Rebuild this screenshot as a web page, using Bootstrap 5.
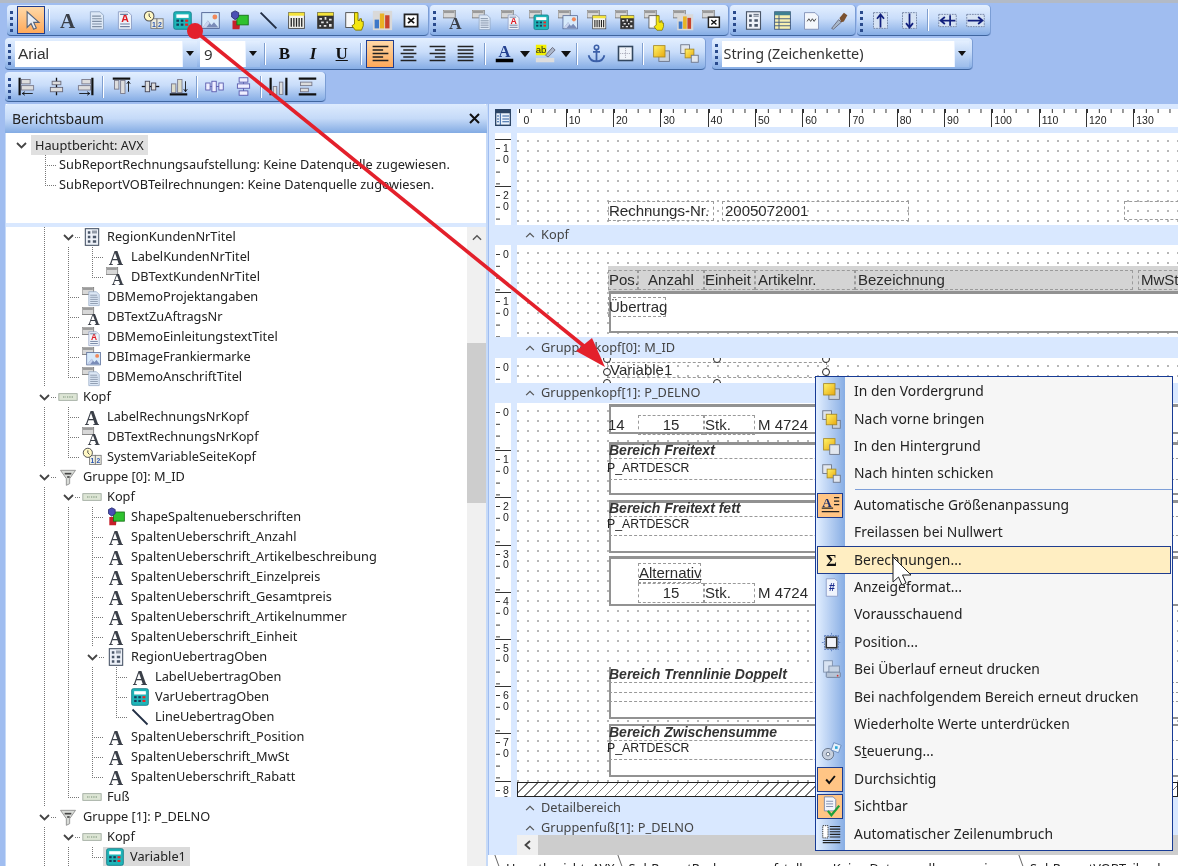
<!DOCTYPE html>
<html lang="de">
<head>
<meta charset="utf-8">
<title>Berichtsdesigner</title>
<link href="https://cdn.jsdelivr.net/npm/bootstrap@5.3.0/dist/css/bootstrap.min.css" rel="stylesheet">
<style>
html,body{margin:0;height:866px;overflow:hidden;background:#A0BDF0}
body{font-family:"Noto Sans",sans-serif;font-size:12.75px;color:#222}
.appwrap{position:relative;width:1178px;height:866px;overflow:hidden;filter:blur(.45px);border-top:3px solid #B2BAC6;background:#A0BDF0;margin-top:0}
.tbrow{display:flex;padding-left:5px}
.r1{height:31px;margin-top:2px;padding-left:7px;gap:2px}
.r2{height:32px;margin-top:2px;gap:7px}
.r3{height:30px;margin-top:2px}
.tband{display:flex;align-items:center;border-radius:4px;background:linear-gradient(#E3EFFF,#C9DDFA 45%,#86ADE5);border-bottom:1px solid #3F659F;box-shadow:1px 0 0 #7A9DD5}
.tgrip{flex:none;display:block;height:100%;position:relative}
.tgrip::after{content:"";position:absolute;left:3px;top:6px;width:3px;height:21px;background:repeating-linear-gradient(#2A4B8D 0 3px,transparent 3px 6px)}
.gw9{width:9.5px}.gw10{width:10px}.gw8{width:8px}
.tbtn{flex:none;display:flex;align-items:center;justify-content:center;padding:0;border:1px solid transparent;border-radius:0;width:28.7px;height:28px;color:#111}
.tbtn svg{width:21px;height:21px;display:block}
.tbtn.on{background:linear-gradient(#FFD9A8,#FFA95A);border-color:#1F3D8F;width:28px}
.tbtn.narrow{width:12px}
.tbtn.narrow svg{width:10px;height:10px}
.sepa{flex:none;height:22px;background:linear-gradient(90deg,#7F9FD0 50%,#fff 50%) center/2px 22px no-repeat}
.s7{width:7px}.s8{width:8px}.s9{width:9px}.s10{width:10px}.s11{width:11px}.s16{width:16px}
.glyph{font:700 17px/1 "Liberation Serif",serif;color:#111}
.combo{flex:none;display:flex;height:26px;background:#fff;font-size:14.4px;line-height:26px;padding-left:2px;color:#333;justify-content:space-between}
.combo b{font-weight:400}
.combo i{display:flex;align-items:center;justify-content:center;width:15px;background:linear-gradient(#E3EFFF,#9DBDEB);border-left:1px solid #EAF2FF}
.combo svg{width:8px;height:5px}
.cb1{width:182px;font-family:"Liberation Sans",sans-serif;font-size:15.5px;padding-left:3px}.cb2{width:60px;margin-left:3px;padding-left:4px;font-size:15px}.cb3{width:247px}
.bodyrow{height:764px;margin-top:2px;display:flex}
.sidepanel{width:483px;margin-left:5px;flex:none;background:#fff;border-left:1px solid #C6DAF8;border-right:2px solid #C6DAF8;display:flex;flex-direction:column}
.sidehead{height:29px;margin:0 -1px;display:flex;align-items:center;justify-content:space-between;padding:0 7px;background:linear-gradient(#DDEBFE,#C5DAF8 50%,#83ABE3);border-radius:4px 4px 0 0;font-size:14px}
.sidehead svg{width:11px;height:11px}
.treeup{height:90px;padding-top:2px;padding-left:3px}
.divide{height:4px;background:#D9E8FF;flex:none}
.treedown{flex:1;display:flex;min-height:0}
.treelist{flex:1;padding-left:26px}
.trow{display:flex;align-items:center;height:20px;white-space:nowrap}
.cc{flex:none;width:24px;height:20px;display:flex;align-items:center;justify-content:center;--dv:repeating-linear-gradient(#777 0 1px,transparent 1px 2px);--dh:repeating-linear-gradient(90deg,#777 0 1px,transparent 1px 2px)}
.cc.g{background:var(--dv) 12px 0/1px 100% no-repeat}
.cc.t{background:var(--dv) 12px 0/1px 100% no-repeat,var(--dh) 12px 10px/12px 1px no-repeat}
.cc.e{background:var(--dv) 12px 0/1px 10px no-repeat,var(--dh) 12px 10px/12px 1px no-repeat}
.cc.x{background:var(--dh) 19px 10px/5px 1px no-repeat}
.cc svg{width:11px;height:7px}
.tic{flex:none;width:24px;height:20px;display:block}
.tx{margin-left:3px}
.hl{background:#E0E0E0;padding:2px 4px;height:20px;line-height:16px;margin-left:-2px}
.hl2{background:#DADADA;display:flex;align-items:center;height:20px;margin-left:-1px}
.hl3{margin-left:2px}
.vscroll{flex:none;width:19px;background:#F0F0F0;position:relative;display:flex;flex-direction:column;align-items:center}
.vscroll svg{width:10px;height:7px;margin-top:7px}
.vthumb{width:100%;height:160px;margin-top:102px;background:#CDCDCD}
.mainpane{flex:1;margin-left:1px;background:#D9E8FF;padding-top:5px;min-width:0;display:flex;flex-direction:column}
.rulertop{display:flex;height:18px}
.corner{flex:none;width:28px;padding-left:6px}
.corner svg{width:16px;height:17px;display:block}
.hrule{flex:1;background:#fff;display:flex;padding-left:1.4px;overflow:hidden}
.hk{flex:none;width:47.3px;height:18px;border-left:1.5px solid #333;font:10.5px/1 "Liberation Sans",sans-serif;padding:6px 0 0 2px;color:#222;background:linear-gradient(90deg,#333 1px,transparent 1px) 0 0/11.83px 4px repeat-x}
.hk.first{border-left-color:transparent;padding-left:4px}
.gap6{height:6px;flex:none}
.secrow{display:flex;flex:none}
.vrule{flex:none;width:16px;margin:0 6px;background:#fff;overflow:hidden}
.vk{height:47.2px;border-top:1px solid #333;font:10.5px/10.5px "Liberation Sans",sans-serif;padding:3px 2px 0 8px;color:#222;text-align:center;background:linear-gradient(#333 1px,transparent 1px) 1px 8px/4px 11.8px repeat-y}
.vk.nol{border-top-color:transparent}
.vk0{height:6px;background:none;border:0;padding:0}
.cnv{flex:1;position:relative;overflow:hidden;background:#fff radial-gradient(circle,#999 .65px,transparent .85px) 6px 3px/10px 10px;font:15px/1.2 "Liberation Sans",sans-serif;color:#2b2b2b}
.cnv>*{position:absolute}
.dash{border:1px dashed #9A9A9A;white-space:nowrap;line-height:18px;overflow:visible}
.pl2{padding-left:2px}
.ctr{text-align:center}
.greybar{background:#D4D4D4}
.reg{background:#fff;border-left:2px solid #929292;border-top:3px solid #929292;border-bottom:2px solid #929292;border-right:0}
.regnb{background:#fff;border-left:2px solid #929292;border-bottom:2px solid #929292}
.bi{font-weight:700;font-style:italic;font-size:14px;color:#333;border:0;border-bottom:1px dashed #999;line-height:15px;white-space:nowrap}
.pa{font-size:12.3px;white-space:nowrap;line-height:14px;color:#222}
.dl{border-bottom:1px dashed #999;height:1px}
.handle{width:8px;height:8px;border:1px solid #222;border-radius:50%;background:#fff}
.hatch{background:repeating-linear-gradient(135deg,#fff 0 6.200px,#777 6.200px 7.100px);border:1px solid #222;left:0;right:0;bottom:0;height:15px}
.secband{height:20px;flex:none;display:flex;align-items:center;padding-left:36px;color:#444;gap:6px;letter-spacing:.05px}
.secband svg{width:10px;height:6px}
.secband.tall{height:21px}
.secband.foot{height:17px;padding-top:3px}
.hscrollrow{height:20px;display:flex;flex:none}
.hleft{flex:none;width:28px}
.hbar{flex:1;background:#CDCDCD;display:flex}
.hbtn{flex:none;width:21px;background:#F0F0F0;display:flex;align-items:center;justify-content:center}
.hbtn svg{width:7px;height:10px}
.tabline{flex:1;background:#fff;display:flex;padding:4px 0 0 18px;white-space:nowrap;overflow:hidden;gap:14px;position:relative;margin-left:-1px}
.tabi{position:relative}
.tabi::before{content:"";position:absolute;left:-8px;top:-4px;height:20px;border-left:1px solid #666;transform:skewX(20deg)}
.repmenu.dropdown-menu{position:absolute;left:815px;top:373px;width:358px;height:475px;border:1px solid #173B95;border-radius:0;padding:1px 0 0;background:linear-gradient(90deg,#E3EFFF,#87ADE4) 0 0/29px 100% no-repeat #F6F6F6;z-index:5;display:block;font-size:13.85px}
.repmenu .dropdown-item{display:flex;align-items:center;height:27.4px;padding:0;color:#222;background:none;letter-spacing:.05px}
.repmenu .mic{flex:none;width:29px;height:27px;display:flex;align-items:center;justify-content:center;padding-left:1px}
.repmenu .mic svg{width:21px;height:21px;display:block}
.repmenu .mtx{margin-left:9px}
.repmenu .mic.on{width:26px;height:25px;margin:0 2px 0 1px;background:#FFC585;border:1px solid #1F3D8F;padding:0}
.repmenu .hot.dropdown-item{margin:0 1px;width:auto;background:#FFEEC2;box-shadow:inset 0 0 0 1px #1F3D8F;color:#222}
.repmenu .hot .mic{width:28px}
.repmenu .dropdown-divider{margin:1.5px 0 1.5px 39px;border-top:1px solid #7E9FD8;opacity:1}
.ovl{position:absolute;left:0;top:-3px;z-index:10;pointer-events:none}
</style>
</head>
<body>
<svg width="0" height="0" style="position:absolute">
<defs>
<linearGradient id="gy" x1="0" y1="0" x2="1" y2="1"><stop offset="0" stop-color="#FFF56A"/><stop offset="1" stop-color="#E9A80E"/></linearGradient>
<symbol id="ptr" viewBox="0 0 24 24"><path d="M7 2v18l4.500-4.500 3 6.500 3-1.500-3-6.300h6z" fill="#E8EDF5" stroke="#55637A" stroke-width="1.300"/></symbol>
<symbol id="A" viewBox="0 0 24 24"><text x="12" y="21" font-family="Liberation Serif" font-weight="700" font-size="24" fill="#3A3F48" text-anchor="middle">A</text></symbol>
<symbol id="memo" viewBox="0 0 24 24"><path d="M5 2h11l4 4v16H5z" fill="#DDE8F6" stroke="#8EA3C0"/><path d="M7 7h10M7 10h11M7 13h11M7 16h11M7 19h11" stroke="#7F8EA3" stroke-width="1.200"/></symbol>
<symbol id="rich" viewBox="0 0 24 24"><path d="M5 2h11l4 4v16H5z" fill="#EEF3FA" stroke="#8C9DC4"/><text x="12.500" y="14" font-family="Liberation Sans" font-weight="700" font-size="12" fill="#E01B24" text-anchor="middle">A</text><path d="M7 5h9M7 16h11M7 19h11" stroke="#6E7FA0" stroke-width="1.300"/></symbol>
<symbol id="sys" viewBox="0 0 24 24"><rect x="9" y="10" width="7" height="11" fill="#EDEDE2" stroke="#777"/><rect x="16" y="10" width="7" height="11" fill="#EDEDE2" stroke="#777"/><text x="12.500" y="19" font-family="Liberation Sans" font-size="8" font-weight="700" fill="#2A56B0" text-anchor="middle">1</text><text x="19.500" y="19" font-family="Liberation Sans" font-size="8" font-weight="700" fill="#2A56B0" text-anchor="middle">2</text><circle cx="7" cy="7" r="5.500" fill="#FFF8C4" stroke="#555" stroke-width="1.200"/><path d="M7 4v3l2 2" stroke="#333" fill="none"/></symbol>
<symbol id="calc" viewBox="0 0 24 24"><rect x="2" y="2" width="20" height="20" rx="2" fill="#1FB5B8" stroke="#0D7A86"/><rect x="5" y="5" width="14" height="4" fill="#fff"/><g fill="#153C58"><rect x="5" y="11" width="3" height="2.500"/><rect x="10" y="11" width="3" height="2.500"/><rect x="5" y="15.500" width="3" height="2.500"/><rect x="10" y="15.500" width="3" height="2.500"/></g><rect x="15" y="11" width="3.500" height="2.500" fill="#E22"/><rect x="15" y="15.500" width="3.500" height="2.500" fill="#E22"/></symbol>
<symbol id="img" viewBox="0 0 24 24"><rect x="2" y="3" width="20" height="18" fill="#D7EAFB" stroke="#4A5F8F"/><path d="M3 20l6-8 4 5 3-3 5 6z" fill="#7A8CB8"/><circle cx="17" cy="8" r="2.800" fill="#F0895B"/><path d="M3 20l6-8 2 3-4 5z" fill="#C8D4EE"/></symbol>
<symbol id="shape" viewBox="0 0 24 24"><path d="M4 12h9l-1 10H4z" fill="#C7202A"/><rect x="9" y="6" width="13" height="11" fill="#2FC22F" stroke="#157015"/><path d="M3 3l4-2 4 2v5l-4 3-4-3z" fill="#4A4FB5" stroke="#2A2E70"/></symbol>
<symbol id="line" viewBox="0 0 24 24"><path d="M3 3l18 18" stroke="#222E44" stroke-width="2.200"/></symbol>
<symbol id="bar" viewBox="0 0 24 24"><rect x="3" y="3" width="18" height="18" fill="#F4F4EE" stroke="#444"/><rect x="3" y="3" width="18" height="3.500" fill="#F3E33C"/><path d="M6 9v10M9 9v10M12 9v10M15 9v10M18 9v10" stroke="#222" stroke-width="1.500"/></symbol>
<symbol id="mat" viewBox="0 0 24 24"><rect x="3" y="3" width="18" height="18" fill="#333" stroke="#444"/><rect x="3" y="3" width="18" height="3.500" fill="#F3E33C"/><path d="M5 9h3v2H5zM11 8h2v3h-2zM16 10h3v2h-3zM7 13h3v2H7zM13 13h2v2h-2zM5 17h2v2H5zM10 17h3v2h-3zM16 16h3v3h-3z" fill="#E5E5E5"/></symbol>
<symbol id="hand" viewBox="0 0 24 24"><rect x="2" y="3" width="13" height="17" fill="#F8F8F8" stroke="#444"/><path d="M12 3h4v9h2v-2h2v3h2v5l-2 5h-7l-4-5 3-2z" fill="#F4E611" stroke="#7A6F00"/></symbol>
<symbol id="chart" viewBox="0 0 24 24"><rect x="1" y="1" width="22" height="22" fill="#D9D9D9"/><rect x="3" y="11" width="5" height="10" fill="#3E78C8"/><rect x="9" y="4" width="5" height="17" fill="#E9B224"/><rect x="15" y="6" width="5" height="15" fill="#C9432B"/></symbol>
<symbol id="xbox" viewBox="0 0 24 24"><rect x="4" y="5" width="15" height="14" fill="#fff" stroke="#222" stroke-width="2"/><path d="M8 9l7 6M15 9l-7 6" stroke="#111" stroke-width="2"/></symbol>
<symbol id="db" viewBox="0 0 24 24"><rect x="0" y="0" width="14" height="9" fill="#D8D8D8" stroke="#777"/><rect x="1" y="1" width="12" height="2.500" fill="#9A9A9A"/></symbol>
<symbol id="dA" viewBox="0 0 24 24"><use href="#db"/><use href="#A" x="4" y="4" width="20" height="20"/></symbol>
<symbol id="dmemo" viewBox="0 0 24 24"><use href="#db"/><use href="#memo" x="4" y="4" width="20" height="20"/></symbol>
<symbol id="drich" viewBox="0 0 24 24"><use href="#db"/><use href="#rich" x="4" y="4" width="20" height="20"/></symbol>
<symbol id="dcalc" viewBox="0 0 24 24"><use href="#db"/><use href="#calc" x="4" y="4" width="20" height="20"/></symbol>
<symbol id="dimg" viewBox="0 0 24 24"><use href="#db"/><use href="#img" x="4" y="4" width="20" height="20"/></symbol>
<symbol id="dbar" viewBox="0 0 24 24"><use href="#db"/><use href="#bar" x="4" y="4" width="20" height="20"/></symbol>
<symbol id="dmat" viewBox="0 0 24 24"><use href="#db"/><use href="#mat" x="4" y="4" width="20" height="20"/></symbol>
<symbol id="dhand" viewBox="0 0 24 24"><use href="#db"/><use href="#hand" x="4" y="4" width="20" height="20"/></symbol>
<symbol id="dchart" viewBox="0 0 24 24"><use href="#db"/><use href="#chart" x="4" y="4" width="20" height="20"/></symbol>
<symbol id="dx" viewBox="0 0 24 24"><use href="#db"/><use href="#xbox" x="4" y="4" width="20" height="20"/></symbol>
<symbol id="region" viewBox="0 0 24 24"><rect x="4" y="2" width="16" height="20" fill="#EDF1F8" stroke="#4A5668" stroke-width="1.300"/><path d="M7 5h3v3H7zM7 10.500h3v3H7zM7 16h3v3H7zM13 16h4v3h-4zM13 10.500h4v3h-4z" fill="#4A5668"/><path d="M12 5h6M12 7h6" stroke="#4A5668"/></symbol>
<symbol id="table" viewBox="0 0 24 24"><rect x="3" y="2" width="18" height="20" fill="#F7EFB0" stroke="#37527E"/><rect x="3" y="2" width="18" height="4" fill="#3F7F91"/><path d="M8 6v16M3 10h18M3 14h18M3 18h18" stroke="#37527E"/></symbol>
<symbol id="cornr" viewBox="0 0 24 24"><rect x="1" y="1" width="22" height="22" fill="#EAF2FC" stroke="#2C4566" stroke-width="2"/><rect x="1" y="1" width="22" height="5" fill="#2C4566"/><path d="M8 6v17M11 10h10M11 14h10M11 18h10M3 10h3M3 14h3M3 18h3" stroke="#2F5F9F" stroke-width="1.500"/></symbol>
<symbol id="wave" viewBox="0 0 24 24"><path d="M4 3h12l4 4v15H4z" fill="#F4F7FC" stroke="#7F8FB5"/><path d="M7 13l2-3 2 3 2-3 2 3 2-3" stroke="#333" fill="none"/></symbol>
<symbol id="brush" viewBox="0 0 24 24"><path d="M3 21l8-10 3 3-9 8z" fill="#A9B8C9" stroke="#667"/><path d="M12 9l5-6 4 3-4 7-3 1z" fill="#7A5130"/></symbol>
<symbol id="up" viewBox="0 0 24 24"><rect x="4" y="3" width="16" height="18" fill="#D6E3F4" stroke="#6F7F9F" stroke-dasharray="2 1"/><path d="M12 20V6m-4 4l4-5 4 5" stroke="#12207E" stroke-width="2" fill="none"/></symbol>
<symbol id="dn" viewBox="0 0 24 24"><rect x="4" y="3" width="16" height="18" fill="#D6E3F4" stroke="#6F7F9F" stroke-dasharray="2 1"/><path d="M12 4v15m-4-4l4 5 4-5" stroke="#12207E" stroke-width="2" fill="none"/></symbol>
<symbol id="lf" viewBox="0 0 24 24"><rect x="2" y="5" width="20" height="14" fill="#D6E3F4" stroke="#6F7F9F" stroke-dasharray="2 1"/><path d="M21 12H5m4-4l-5 4 5 4M15 6v12" stroke="#12207E" stroke-width="2" fill="none"/></symbol>
<symbol id="rt" viewBox="0 0 24 24"><rect x="2" y="5" width="20" height="14" fill="#D6E3F4" stroke="#6F7F9F" stroke-dasharray="2 1"/><path d="M3 12h16m-4-4l5 4-5 4" stroke="#12207E" stroke-width="2" fill="none"/></symbol>
<symbol id="aL" viewBox="0 0 24 24"><path d="M3 4h18M3 8h12M3 12h18M3 16h12M3 20h18" stroke="#222" stroke-width="1.800"/></symbol>
<symbol id="aC" viewBox="0 0 24 24"><path d="M3 4h18M6 8h12M3 12h18M6 16h12M3 20h18" stroke="#222" stroke-width="1.800"/></symbol>
<symbol id="aR" viewBox="0 0 24 24"><path d="M3 4h18M9 8h12M3 12h18M9 16h12M3 20h18" stroke="#222" stroke-width="1.800"/></symbol>
<symbol id="aJ" viewBox="0 0 24 24"><path d="M3 4h18M3 8h18M3 12h18M3 16h18M3 20h18" stroke="#222" stroke-width="1.800"/></symbol>
<symbol id="fcol" viewBox="0 0 24 24"><text x="12" y="16" font-family="Liberation Serif" font-weight="700" font-size="19" fill="#23408F" text-anchor="middle">A</text><rect x="2" y="18" width="20" height="4" fill="#000"/></symbol>
<symbol id="ab" viewBox="0 0 24 24"><rect x="1" y="2" width="12" height="12" fill="#F3F000"/><text x="7" y="11" font-family="Liberation Sans" font-size="11" fill="#222" text-anchor="middle">ab</text><path d="M12 14l8-9 3 3-8 8z" fill="#AAB5C9" stroke="#667"/><rect x="1" y="17" width="21" height="5" fill="#DDD"/></symbol>
<symbol id="anch" viewBox="0 0 24 24"><circle cx="12" cy="5" r="2.500" fill="none" stroke="#3B5FA8" stroke-width="1.800"/><path d="M12 7v14M8 10h8M3 14c1 5 5 7 9 7s8-2 9-7" fill="none" stroke="#3B5FA8" stroke-width="2"/></symbol>
<symbol id="frame" viewBox="0 0 24 24"><rect x="4" y="4" width="16" height="16" fill="#F0F4FA" stroke="#33475F" stroke-width="1.800"/><path d="M12 6v12M6 12h12" stroke="#99A" stroke-dasharray="1 1"/></symbol>
<symbol id="f1" viewBox="0 0 24 24"><rect x="9" y="9" width="12" height="12" fill="#C9D2DF" stroke="#6A7386"/><rect x="3" y="3" width="13" height="13" fill="url(#gy)" stroke="#A88A25"/></symbol>
<symbol id="f2" viewBox="0 0 24 24"><rect x="2" y="2" width="10" height="10" fill="#DDE3EC" stroke="#6A7386"/><rect x="13" y="13" width="9" height="9" fill="#C9D2DF" stroke="#6A7386"/><rect x="6" y="6" width="12" height="12" fill="url(#gy)" stroke="#A88A25"/></symbol>
<symbol id="f3" viewBox="0 0 24 24"><rect x="3" y="3" width="13" height="13" fill="url(#gy)" stroke="#A88A25"/><rect x="10" y="10" width="11" height="11" fill="#E2E7EF" stroke="#6A7386"/></symbol>
<symbol id="f4" viewBox="0 0 24 24"><rect x="2" y="2" width="10" height="10" fill="#E2E7EF" stroke="#6A7386"/><rect x="7" y="7" width="10" height="10" fill="url(#gy)" stroke="#A88A25"/><rect x="14" y="14" width="8" height="8" fill="#E2E7EF" stroke="#6A7386"/></symbol>
<symbol id="l1" viewBox="0 0 24 24"><path d="M3 2v20" stroke="#111" stroke-width="2.500"/><rect x="5" y="4" width="10" height="5" fill="#DDD" stroke="#778"/><rect x="5" y="11" width="14" height="5" fill="#DDD" stroke="#778"/><path d="M18 20H6m3-2l-3 2 3 2" stroke="#111" fill="none"/></symbol>
<symbol id="l2" viewBox="0 0 24 24"><path d="M12 2v20" stroke="#111" stroke-width="1.500"/><rect x="7" y="6" width="10" height="4" fill="#DDD" stroke="#667"/><rect x="5" y="13" width="14" height="5" fill="#DDD" stroke="#667"/></symbol>
<symbol id="l3" viewBox="0 0 24 24"><path d="M21 2v20" stroke="#111" stroke-width="2.500"/><rect x="9" y="4" width="10" height="5" fill="#DDD" stroke="#778"/><rect x="5" y="11" width="14" height="5" fill="#DDD" stroke="#778"/><path d="M6 20h12m-3-2l3 2-3 2" stroke="#111" fill="none"/></symbol>
<symbol id="t1" viewBox="0 0 24 24"><path d="M2 3h20" stroke="#111" stroke-width="2.500"/><rect x="4" y="5" width="5" height="10" fill="#DDD" stroke="#778"/><rect x="11" y="5" width="5" height="15" fill="#DDD" stroke="#778"/><path d="M20 18V6m-2 3l2-3 2 3" stroke="#111" fill="none"/></symbol>
<symbol id="t2" viewBox="0 0 24 24"><path d="M2 12h20" stroke="#111" stroke-width="1.500"/><rect x="6" y="6" width="5" height="12" fill="#DDD" stroke="#445"/><rect x="13" y="8" width="5" height="8" fill="#DDD" stroke="#445"/></symbol>
<symbol id="t3" viewBox="0 0 24 24"><path d="M2 21h20" stroke="#111" stroke-width="2.500"/><rect x="4" y="9" width="5" height="10" fill="#DDC" stroke="#778"/><rect x="11" y="4" width="5" height="15" fill="#DDC" stroke="#778"/><path d="M20 6v12m-2-3l2 3 2-3" stroke="#111" fill="none"/></symbol>
<symbol id="h1" viewBox="0 0 24 24"><path d="M2 12h20" stroke="#55A"/><rect x="2" y="8" width="5" height="8" fill="#EEF" stroke="#55A"/><rect x="9" y="6" width="5" height="12" fill="#EEF" stroke="#55A"/><rect x="17" y="8" width="5" height="8" fill="#EEF" stroke="#55A"/></symbol>
<symbol id="v1" viewBox="0 0 24 24"><path d="M12 2v20" stroke="#55A"/><rect x="7" y="2" width="10" height="5" fill="#EEF" stroke="#55A"/><rect x="5" y="9" width="14" height="5" fill="#EEF" stroke="#55A"/><rect x="7" y="17" width="10" height="5" fill="#EEF" stroke="#55A"/></symbol>
<symbol id="s1" viewBox="0 0 24 24"><path d="M3 2v20M21 2v20" stroke="#111" stroke-width="2.500"/><rect x="6" y="12" width="4" height="9" fill="#DDD" stroke="#778"/><rect x="13" y="7" width="4" height="14" fill="#DDD" stroke="#778"/></symbol>
<symbol id="s2" viewBox="0 0 24 24"><path d="M2 3h20M2 21h20" stroke="#111" stroke-width="2.500"/><rect x="4" y="7" width="13" height="4" fill="#DDD" stroke="#778"/><rect x="4" y="14" width="9" height="4" fill="#DDD" stroke="#778"/></symbol>
<symbol id="band" viewBox="0 0 24 24"><rect x="1" y="8" width="22" height="8" fill="#DDE5D5" stroke="#9AA79A"/><path d="M6 12h3M11 12h3M15 12h3" stroke="#4C6E4C" stroke-dasharray="1 1"/></symbol>
<symbol id="grp" viewBox="0 0 24 24"><path d="M3 4h18l-7 10v6l-4 2v-8z" fill="#D9DCD8" stroke="#888"/><path d="M8 8h8" stroke="#444" stroke-width="2"/><path d="M11 12h3" stroke="#444" stroke-width="2"/></symbol>
<symbol id="chev" viewBox="0 0 11 7"><path d="M1 1l4.500 4.500L10 1" fill="none" stroke="#444" stroke-width="1.800"/></symbol>
<symbol id="chup" viewBox="0 0 11 7"><path d="M1 6l4.500-4.500L10 6" fill="none" stroke="#555" stroke-width="1.500"/></symbol>
<symbol id="tri" viewBox="0 0 8 5"><path d="M0 0h8L4 5z" fill="#111"/></symbol>
<symbol id="clos" viewBox="0 0 11 11"><path d="M1 1l9 9M10 1l-9 9" stroke="#111" stroke-width="2"/></symbol>
<symbol id="auto" viewBox="0 0 24 24"><text x="8" y="14" font-family="Liberation Serif" font-weight="700" font-size="15" fill="#1D2D6B" text-anchor="middle">A</text><path d="M2 15h13M2 19h20M16 3h6M16 7h6M16 11h6" stroke="#222" stroke-width="1.300"/></symbol>
<symbol id="fmt" viewBox="0 0 24 24"><path d="M6 2h10l3 3v17H6z" fill="#F0F4FC" stroke="#8C9BC7"/><text x="12.500" y="16" font-family="Liberation Sans" font-weight="700" font-size="12" fill="#1A2A8E" text-anchor="middle">#</text></symbol>
<symbol id="pos" viewBox="0 0 24 24"><rect x="6" y="6" width="12" height="12" fill="#F2F4FA" stroke="#333" stroke-width="1.800"/><path d="M12 1v3M12 20v3M1 12h3M20 12h3M4 4h16M4 20h16M4 4v16M20 4v16" stroke="#5B7DBF" stroke-dasharray="2 1"/></symbol>
<symbol id="print" viewBox="0 0 24 24"><rect x="3" y="2" width="10" height="13" fill="#D8E3F2" stroke="#7C8EA9"/><rect x="9" y="8" width="12" height="8" fill="#C7D4E5" stroke="#7C8EA9"/><rect x="6" y="15" width="16" height="6" rx="1" fill="#B7C4D6" stroke="#6D7E99"/><circle cx="19" cy="19" r="1" fill="#C33"/></symbol>
<symbol id="ctrl" viewBox="0 0 24 24"><circle cx="8" cy="15" r="6.500" fill="#C7D0DE" stroke="#5E6B80"/><circle cx="8" cy="15" r="2" fill="#fff" stroke="#5E6B80"/><rect x="13" y="3" width="9" height="9" transform="rotate(20 17 7)" fill="#E6F1FB" stroke="#6B8DBF"/><rect x="16" y="6" width="3" height="3" fill="#2AA5D8"/></symbol>
<symbol id="chk" viewBox="0 0 24 24"><path d="M7 12l3.500 4L17 8" fill="none" stroke="#111" stroke-width="2.200"/></symbol>
<symbol id="vis" viewBox="0 0 24 24"><path d="M5 1h10l3 3v13H5z" fill="#F2F5FB" stroke="#7785A5"/><path d="M7 6h8M7 9h8M7 12h8" stroke="#7785A5"/><path d="M9 17l4 5 9-11" fill="none" stroke="#1EA03C" stroke-width="2.600"/></symbol>
<symbol id="wrap" viewBox="0 0 24 24"><rect x="2" y="3" width="6" height="14" fill="#fff" stroke="#222" stroke-dasharray="1.500 1"/><path d="M2 20h20M2 22.500h20M10 4h12M10 7h12M10 10h12M10 13h12M10 16h12" stroke="#222" stroke-width="1.300"/></symbol>
<symbol id="sig" viewBox="0 0 24 24"><text x="12" y="18" font-family="Liberation Serif" font-weight="700" font-size="19" fill="#111" text-anchor="middle">Σ</text></symbol>
</defs>
</svg>

<div class="appwrap">
  <div class="tbrow r1">
    <div class="tband" style="width:421px">
      <span class="tgrip gw10"></span>
      <button class="btn tbtn on" type="button"><svg><use href="#ptr"/></svg></button>
      <span class="sepa s8"></span>
      <button class="btn tbtn" type="button"><svg><use href="#A"/></svg></button>
      <button class="btn tbtn" type="button"><svg><use href="#memo"/></svg></button>
      <button class="btn tbtn" type="button"><svg><use href="#rich"/></svg></button>
      <button class="btn tbtn" type="button"><svg><use href="#sys"/></svg></button>
      <button class="btn tbtn" type="button"><svg><use href="#calc"/></svg></button>
      <button class="btn tbtn" type="button"><svg><use href="#img"/></svg></button>
      <button class="btn tbtn" type="button"><svg><use href="#shape"/></svg></button>
      <button class="btn tbtn" type="button"><svg><use href="#line"/></svg></button>
      <button class="btn tbtn" type="button"><svg><use href="#bar"/></svg></button>
      <button class="btn tbtn" type="button"><svg><use href="#mat"/></svg></button>
      <button class="btn tbtn" type="button"><svg><use href="#hand"/></svg></button>
      <button class="btn tbtn" type="button"><svg><use href="#chart"/></svg></button>
      <button class="btn tbtn" type="button"><svg><use href="#xbox"/></svg></button>
    </div>
    <div class="tband" style="width:298px">
      <span class="tgrip gw9"></span>
      <button class="btn tbtn" type="button"><svg><use href="#dA"/></svg></button>
      <button class="btn tbtn" type="button"><svg><use href="#dmemo"/></svg></button>
      <button class="btn tbtn" type="button"><svg><use href="#drich"/></svg></button>
      <button class="btn tbtn" type="button"><svg><use href="#dcalc"/></svg></button>
      <button class="btn tbtn" type="button"><svg><use href="#dimg"/></svg></button>
      <button class="btn tbtn" type="button"><svg><use href="#dbar"/></svg></button>
      <button class="btn tbtn" type="button"><svg><use href="#dmat"/></svg></button>
      <button class="btn tbtn" type="button"><svg><use href="#dhand"/></svg></button>
      <button class="btn tbtn" type="button"><svg><use href="#dchart"/></svg></button>
      <button class="btn tbtn" type="button"><svg><use href="#dx"/></svg></button>
    </div>
    <div class="tband" style="width:125px">
      <span class="tgrip gw9"></span>
      <button class="btn tbtn" type="button"><svg><use href="#region"/></svg></button>
      <button class="btn tbtn" type="button"><svg><use href="#table"/></svg></button>
      <button class="btn tbtn" type="button"><svg><use href="#wave"/></svg></button>
      <button class="btn tbtn" type="button"><svg><use href="#brush"/></svg></button>
    </div>
    <div class="tband" style="width:133px">
      <span class="tgrip gw9"></span>
      <button class="btn tbtn" type="button"><svg><use href="#up"/></svg></button>
      <button class="btn tbtn" type="button"><svg><use href="#dn"/></svg></button>
      <span class="sepa s9"></span>
      <button class="btn tbtn" type="button"><svg><use href="#lf"/></svg></button>
      <button class="btn tbtn" type="button"><svg><use href="#rt"/></svg></button>
    </div>
  </div>
  <div class="tbrow r2">
    <div class="tband" style="width:700px">
      <span class="tgrip gw10"></span>
      <div class="combo cb1"><b>Arial</b><i><svg><use href="#tri"/></svg></i></div>
      <div class="combo cb2"><b>9</b><i><svg><use href="#tri"/></svg></i></div>
      <span class="sepa s10"></span>
      <button class="btn tbtn" type="button"><span class="glyph">B</span></button>
      <button class="btn tbtn" type="button"><span class="glyph fst-italic">I</span></button>
      <button class="btn tbtn" type="button"><span class="glyph text-decoration-underline">U</span></button>
      <span class="sepa s10"></span>
      <button class="btn tbtn on" type="button"><svg><use href="#aL"/></svg></button>
      <button class="btn tbtn" type="button"><svg><use href="#aC"/></svg></button>
      <button class="btn tbtn" type="button"><svg><use href="#aR"/></svg></button>
      <button class="btn tbtn" type="button"><svg><use href="#aJ"/></svg></button>
      <span class="sepa s10"></span>
      <button class="btn tbtn" type="button"><svg><use href="#fcol"/></svg></button>
      <button class="btn tbtn narrow" type="button"><svg><use href="#tri"/></svg></button>
      <button class="btn tbtn" type="button"><svg><use href="#ab"/></svg></button>
      <button class="btn tbtn narrow" type="button"><svg><use href="#tri"/></svg></button>
      <span class="sepa s11"></span>
      <button class="btn tbtn" type="button"><svg><use href="#anch"/></svg></button>
      <button class="btn tbtn" type="button"><svg><use href="#frame"/></svg></button>
      <span class="sepa s7"></span>
      <button class="btn tbtn" type="button"><svg><use href="#f1"/></svg></button>
      <button class="btn tbtn" type="button"><svg><use href="#f4"/></svg></button>
    </div>
    <div class="tband" style="width:260px">
      <span class="tgrip gw9"></span>
      <div class="combo cb3"><b>String (Zeichenkette)</b><i><svg><use href="#tri"/></svg></i></div>
    </div>
  </div>
  <div class="tbrow r3">
    <div class="tband" style="width:320px">
      <span class="tgrip gw8"></span>
      <button class="btn tbtn" type="button"><svg><use href="#l1"/></svg></button>
      <button class="btn tbtn" type="button"><svg><use href="#l2"/></svg></button>
      <button class="btn tbtn" type="button"><svg><use href="#l3"/></svg></button>
      <span class="sepa s8"></span>
      <button class="btn tbtn" type="button"><svg><use href="#t1"/></svg></button>
      <button class="btn tbtn" type="button"><svg><use href="#t2"/></svg></button>
      <button class="btn tbtn" type="button"><svg><use href="#t3"/></svg></button>
      <span class="sepa s7"></span>
      <button class="btn tbtn" type="button"><svg><use href="#h1"/></svg></button>
      <button class="btn tbtn" type="button"><svg><use href="#v1"/></svg></button>
      <span class="sepa s7"></span>
      <button class="btn tbtn" type="button"><svg><use href="#s1"/></svg></button>
      <button class="btn tbtn" type="button"><svg><use href="#s2"/></svg></button>
    </div>
  </div>

  <div class="bodyrow">
    <aside class="sidepanel">
      <div class="sidehead"><span>Berichtsbaum</span><svg><use href="#clos"/></svg></div>
      <ul class="list-unstyled mb-0 treeup">
        <li class="trow"><span class="cc"><svg><use href="#chev"/></svg></span><span class="hl">Hauptbericht: AVX</span></li>
        <li class="trow"><span class="cc"></span><span class="cc t"></span><span class="hl3">SubReportRechnungsaufstellung: Keine Datenquelle zugewiesen.</span></li>
        <li class="trow"><span class="cc"></span><span class="cc e"></span><span class="hl3">SubReportVOBTeilrechnungen: Keine Datenquelle zugewiesen.</span></li>
      </ul>
      <div class="divide"></div>
      <div class="treedown">
        <ul class="list-unstyled mb-0 treelist">
          <li class="trow"><span class="cc g"></span><span class="cc x"><svg><use href="#chev"/></svg></span><svg class="tic"><use href="#region"/></svg><span class="tx">RegionKundenNrTitel</span></li>
          <li class="trow"><span class="cc g"></span><span class="cc g"></span><span class="cc t"></span><svg class="tic"><use href="#A"/></svg><span class="tx">LabelKundenNrTitel</span></li>
          <li class="trow"><span class="cc g"></span><span class="cc g"></span><span class="cc e"></span><svg class="tic"><use href="#dA"/></svg><span class="tx">DBTextKundenNrTitel</span></li>
          <li class="trow"><span class="cc g"></span><span class="cc t"></span><svg class="tic"><use href="#dmemo"/></svg><span class="tx">DBMemoProjektangaben</span></li>
          <li class="trow"><span class="cc g"></span><span class="cc t"></span><svg class="tic"><use href="#dA"/></svg><span class="tx">DBTextZuAftragsNr</span></li>
          <li class="trow"><span class="cc g"></span><span class="cc t"></span><svg class="tic"><use href="#drich"/></svg><span class="tx">DBMemoEinleitungstextTitel</span></li>
          <li class="trow"><span class="cc g"></span><span class="cc t"></span><svg class="tic"><use href="#dimg"/></svg><span class="tx">DBImageFrankiermarke</span></li>
          <li class="trow"><span class="cc g"></span><span class="cc e"></span><svg class="tic"><use href="#dmemo"/></svg><span class="tx">DBMemoAnschriftTitel</span></li>
          <li class="trow"><span class="cc x"><svg><use href="#chev"/></svg></span><svg class="tic"><use href="#band"/></svg><span class="tx">Kopf</span></li>
          <li class="trow"><span class="cc g"></span><span class="cc t"></span><svg class="tic"><use href="#A"/></svg><span class="tx">LabelRechnungsNrKopf</span></li>
          <li class="trow"><span class="cc g"></span><span class="cc t"></span><svg class="tic"><use href="#dA"/></svg><span class="tx">DBTextRechnungsNrKopf</span></li>
          <li class="trow"><span class="cc g"></span><span class="cc e"></span><svg class="tic"><use href="#sys"/></svg><span class="tx">SystemVariableSeiteKopf</span></li>
          <li class="trow"><span class="cc x"><svg><use href="#chev"/></svg></span><svg class="tic"><use href="#grp"/></svg><span class="tx">Gruppe [0]: M_ID</span></li>
          <li class="trow"><span class="cc g"></span><span class="cc x"><svg><use href="#chev"/></svg></span><svg class="tic"><use href="#band"/></svg><span class="tx">Kopf</span></li>
          <li class="trow"><span class="cc g"></span><span class="cc g"></span><span class="cc t"></span><svg class="tic"><use href="#shape"/></svg><span class="tx">ShapeSpaltenueberschriften</span></li>
          <li class="trow"><span class="cc g"></span><span class="cc g"></span><span class="cc t"></span><svg class="tic"><use href="#A"/></svg><span class="tx">SpaltenUeberschrift_Anzahl</span></li>
          <li class="trow"><span class="cc g"></span><span class="cc g"></span><span class="cc t"></span><svg class="tic"><use href="#A"/></svg><span class="tx">SpaltenUeberschrift_Artikelbeschreibung</span></li>
          <li class="trow"><span class="cc g"></span><span class="cc g"></span><span class="cc t"></span><svg class="tic"><use href="#A"/></svg><span class="tx">SpaltenUeberschrift_Einzelpreis</span></li>
          <li class="trow"><span class="cc g"></span><span class="cc g"></span><span class="cc t"></span><svg class="tic"><use href="#A"/></svg><span class="tx">SpaltenUeberschrift_Gesamtpreis</span></li>
          <li class="trow"><span class="cc g"></span><span class="cc g"></span><span class="cc t"></span><svg class="tic"><use href="#A"/></svg><span class="tx">SpaltenUeberschrift_Artikelnummer</span></li>
          <li class="trow"><span class="cc g"></span><span class="cc g"></span><span class="cc t"></span><svg class="tic"><use href="#A"/></svg><span class="tx">SpaltenUeberschrift_Einheit</span></li>
          <li class="trow"><span class="cc g"></span><span class="cc g"></span><span class="cc x"><svg><use href="#chev"/></svg></span><svg class="tic"><use href="#region"/></svg><span class="tx">RegionUebertragOben</span></li>
          <li class="trow"><span class="cc g"></span><span class="cc g"></span><span class="cc g"></span><span class="cc t"></span><svg class="tic"><use href="#A"/></svg><span class="tx">LabelUebertragOben</span></li>
          <li class="trow"><span class="cc g"></span><span class="cc g"></span><span class="cc g"></span><span class="cc t"></span><svg class="tic"><use href="#calc"/></svg><span class="tx">VarUebertragOben</span></li>
          <li class="trow"><span class="cc g"></span><span class="cc g"></span><span class="cc g"></span><span class="cc e"></span><svg class="tic"><use href="#line"/></svg><span class="tx">LineUebertragOben</span></li>
          <li class="trow"><span class="cc g"></span><span class="cc g"></span><span class="cc t"></span><svg class="tic"><use href="#A"/></svg><span class="tx">SpaltenUeberschrift_Position</span></li>
          <li class="trow"><span class="cc g"></span><span class="cc g"></span><span class="cc t"></span><svg class="tic"><use href="#A"/></svg><span class="tx">SpaltenUeberschrift_MwSt</span></li>
          <li class="trow"><span class="cc g"></span><span class="cc g"></span><span class="cc e"></span><svg class="tic"><use href="#A"/></svg><span class="tx">SpaltenUeberschrift_Rabatt</span></li>
          <li class="trow"><span class="cc g"></span><span class="cc e"></span><svg class="tic"><use href="#band"/></svg><span class="tx">Fuß</span></li>
          <li class="trow"><span class="cc x"><svg><use href="#chev"/></svg></span><svg class="tic"><use href="#grp"/></svg><span class="tx">Gruppe [1]: P_DELNO</span></li>
          <li class="trow"><span class="cc g"></span><span class="cc x"><svg><use href="#chev"/></svg></span><svg class="tic"><use href="#band"/></svg><span class="tx">Kopf</span></li>
          <li class="trow"><span class="cc g"></span><span class="cc g"></span><span class="cc e"></span><span class="hl2"><svg class="tic"><use href="#calc"/></svg><span class="tx pe-1">Variable1</span></span></li>
        </ul>
        <div class="vscroll"><svg><use href="#chup"/></svg><div class="vthumb"></div></div>
      </div>
    </aside>

    <main class="mainpane">
      <div class="rulertop">
        <div class="corner"><svg viewBox="0 0 24 24" preserveAspectRatio="none"><use href="#cornr"/></svg></div>
        <div class="hrule">
          <span class="hk first">0</span><span class="hk">10</span><span class="hk">20</span><span class="hk">30</span><span class="hk">40</span><span class="hk">50</span><span class="hk">60</span><span class="hk">70</span><span class="hk">80</span><span class="hk">90</span><span class="hk">100</span><span class="hk">110</span><span class="hk">120</span><span class="hk">130</span>
        </div>
      </div>
      <div class="gap6"></div>

      <section class="secrow" style="height:92px">
        <div class="vrule"><div class="vk vk0"></div><div class="vk">1<br>0</div><div class="vk">2<br>0</div></div>
        <div class="cnv">
          <div class="dash" style="left:91px;top:68px;width:106px;height:20px">Rechnungs-Nr.</div>
          <div class="dash pl2" style="left:205px;top:68px;width:187px;height:20px">2005072001</div>
          <div class="dash" style="left:607px;top:68px;width:70px;height:19px"></div>
        </div>
      </section>
      <div class="secband"><svg><use href="#chup"/></svg><span>Kopf</span></div>

      <section class="secrow" style="height:92px">
        <div class="vrule"><div class="vk nol">0</div><div class="vk">1<br>0</div></div>
        <div class="cnv">
          <div class="greybar" style="left:91px;top:21px;width:580px;height:26px"></div>
          <div class="dash" style="left:91px;top:25px;width:30px;height:20px">Pos.</div>
          <div class="dash ctr" style="left:121px;top:25px;width:66px;height:20px">Anzahl</div>
          <div class="dash" style="left:187px;top:25px;width:51px;height:20px">Einheit</div>
          <div class="dash pl2" style="left:238px;top:25px;width:100px;height:20px">Artikelnr.</div>
          <div class="dash pl2" style="left:338px;top:25px;width:278px;height:20px">Bezeichnung</div>
          <div class="dash pl2" style="left:621px;top:25px;width:60px;height:20px">MwSt</div>
          <div class="reg" style="left:92px;top:46px;width:590px;height:42px"></div>
          <div class="dash" style="left:91px;top:52px;width:58px;height:20px">Übertrag</div>
        </div>
      </section>
      <div class="secband tall"><svg><use href="#chup"/></svg><span>Gruppenkopf[0]: M_ID</span></div>

      <section class="secrow" style="height:25px">
        <div class="vrule"><div class="vk nol">0</div></div>
        <div class="cnv">
          <div class="dash pl2" style="left:90px;top:4px;width:220px;height:16px;line-height:14px">Variable1</div>
          <span class="handle" style="left:86px;top:-3px"></span><span class="handle" style="left:86px;top:10px"></span><span class="handle" style="left:86px;top:21px"></span>
          <span class="handle" style="left:196px;top:-3px"></span><span class="handle" style="left:196px;top:21px"></span>
          <span class="handle" style="left:305px;top:-3px"></span><span class="handle" style="left:305px;top:10px"></span><span class="handle" style="left:305px;top:21px"></span>
        </div>
      </section>
      <div class="secband"><svg><use href="#chup"/></svg><span>Gruppenkopf[1]: P_DELNO</span></div>

      <section class="secrow" style="height:394px">
        <div class="vrule"><div class="vk nol">0</div><div class="vk">1<br>0</div><div class="vk">2<br>0</div><div class="vk">3<br>0</div><div class="vk">4<br>0</div><div class="vk">5<br>0</div><div class="vk">6<br>0</div><div class="vk">7<br>0</div><div class="vk">8<br>0</div></div>
        <div class="cnv">
          <div class="reg" style="left:92px;top:1px;width:590px;height:30px"></div>
          <div style="left:91px;top:13px">14</div>
          <div class="dash ctr" style="left:121px;top:12px;width:66px;height:20px">15</div>
          <div class="dash" style="left:187px;top:12px;width:51px;height:20px">Stk.</div>
          <div style="left:241px;top:13px">M 4724</div>

          <div class="reg" style="left:92px;top:39px;width:590px;height:53px"></div>
          <div class="bi" style="left:92px;top:40px;width:590px">Bereich Freitext</div>
          <div class="pa" style="left:90px;top:58px">P_ARTDESCR</div>
          <div class="dl" style="left:92px;top:76px;width:590px"></div>

          <div class="reg" style="left:92px;top:97px;width:590px;height:53px"></div>
          <div class="bi" style="left:92px;top:98px;width:590px">Bereich Freitext fett</div>
          <div class="pa" style="left:90px;top:114px">P_ARTDESCR</div>
          <div class="dl" style="left:92px;top:132px;width:590px"></div>

          <div class="reg" style="left:92px;top:153px;width:590px;height:50px"></div>
          <div class="dash text-decoration-underline" style="left:121px;top:160px;width:63px;height:20px">Alternativ</div>
          <div class="dash ctr" style="left:121px;top:180px;width:66px;height:20px">15</div>
          <div class="dash" style="left:187px;top:180px;width:51px;height:20px">Stk.</div>
          <div style="left:241px;top:181px">M 4724</div>

          <div class="regnb" style="left:92px;top:264px;width:590px;height:52px"></div>
          <div class="bi" style="left:92px;top:264px;width:590px">Bereich Trennlinie Doppelt</div>
          <div class="dl" style="left:92px;top:289px;width:590px"></div>
          <div class="dl" style="left:92px;top:298px;width:590px"></div>

          <div class="regnb" style="left:92px;top:321px;width:590px;height:53px;border-top:2px solid #929292"></div>
          <div class="bi" style="left:92px;top:322px;width:590px">Bereich Zwischensumme</div>
          <div class="pa" style="left:90px;top:338px">P_ARTDESCR</div>
          <div class="dl" style="left:92px;top:356px;width:590px"></div>

          <div class="hatch"></div>
        </div>
      </section>
      <div class="secband tall"><svg><use href="#chup"/></svg><span>Detailbereich</span></div>
      <div class="secband foot"><svg><use href="#chup"/></svg><span>Gruppenfuß[1]: P_DELNO</span></div>

      <div class="hscrollrow"><div class="hleft"></div><div class="hbar"><div class="hbtn"><svg viewBox="0 0 7 10"><path d="M6 1L1.500 5 6 9" fill="none" stroke="#444" stroke-width="1.800"/></svg></div></div></div>
      <div class="tabline"><span class="tabi">Hauptbericht: AVX</span><span class="tabi">SubReportRechnungsaufstellung: Keine Datenquelle zugewiesen</span><span class="tabi">SubReportVOBTeilrechnungen</span></div>
    </main>
  </div>

  <ul class="dropdown-menu show repmenu list-unstyled mb-0">
    <li><span class="dropdown-item"><span class="mic"><svg><use href="#f1"/></svg></span><span class="mtx">In den Vordergrund</span></span></li>
    <li><span class="dropdown-item"><span class="mic"><svg><use href="#f2"/></svg></span><span class="mtx">Nach vorne bringen</span></span></li>
    <li><span class="dropdown-item"><span class="mic"><svg><use href="#f3"/></svg></span><span class="mtx">In den Hintergrund</span></span></li>
    <li><span class="dropdown-item"><span class="mic"><svg><use href="#f4"/></svg></span><span class="mtx">Nach hinten schicken</span></span></li>
    <li><hr class="dropdown-divider"></li>
    <li><span class="dropdown-item"><span class="mic on"><svg><use href="#auto"/></svg></span><span class="mtx">Automatische Größenanpassung</span></span></li>
    <li><span class="dropdown-item"><span class="mic"></span><span class="mtx">Freilassen bei Nullwert</span></span></li>
    <li><span class="dropdown-item hot"><span class="mic"><svg><use href="#sig"/></svg></span><span class="mtx">Berechnungen...</span></span></li>
    <li><span class="dropdown-item"><span class="mic"><svg><use href="#fmt"/></svg></span><span class="mtx">Anzeigeformat...</span></span></li>
    <li><span class="dropdown-item"><span class="mic"></span><span class="mtx">Vorausschauend</span></span></li>
    <li><span class="dropdown-item"><span class="mic"><svg><use href="#pos"/></svg></span><span class="mtx">Position...</span></span></li>
    <li><span class="dropdown-item"><span class="mic"><svg><use href="#print"/></svg></span><span class="mtx">Bei Überlauf erneut drucken</span></span></li>
    <li><span class="dropdown-item"><span class="mic"></span><span class="mtx">Bei nachfolgendem Bereich erneut drucken</span></span></li>
    <li><span class="dropdown-item"><span class="mic"></span><span class="mtx">Wiederholte Werte unterdrücken</span></span></li>
    <li><span class="dropdown-item"><span class="mic"><svg><use href="#ctrl"/></svg></span><span class="mtx">S<u>t</u>euerung...</span></span></li>
    <li><span class="dropdown-item"><span class="mic on"><svg><use href="#chk"/></svg></span><span class="mtx">Durchsichtig</span></span></li>
    <li><span class="dropdown-item"><span class="mic on"><svg><use href="#vis"/></svg></span><span class="mtx">Sichtbar</span></span></li>
    <li><span class="dropdown-item"><span class="mic"><svg><use href="#wrap"/></svg></span><span class="mtx">Automatischer Zeilenumbruch</span></span></li>
  </ul>

  <svg class="ovl" width="1178" height="866" viewBox="0 0 1178 866">
    <circle cx="195" cy="31" r="8" fill="#E3202B"/>
    <path d="M195 31L590 351" stroke="#E3202B" stroke-width="3.600"/>
    <path d="M605 367L576 351 592 338z" fill="#E3202B"/>
    <path d="M893 557v25l5.500-5 3.500 8 4-2-3.500-8h8.500z" fill="#fff" stroke="#222" stroke-width="1"/>
  </svg>
</div>
</body>
</html>
